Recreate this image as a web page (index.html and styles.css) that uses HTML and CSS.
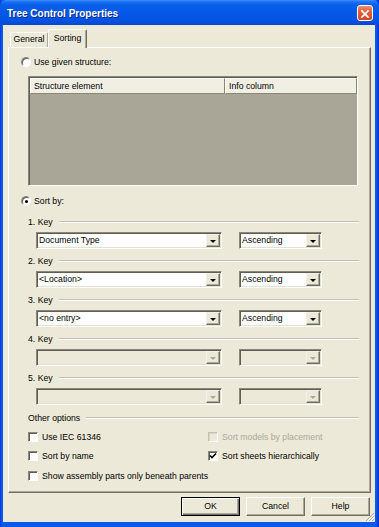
FILE: index.html
```html
<!DOCTYPE html>
<html>
<head>
<meta charset="utf-8">
<title>Tree Control Properties</title>
<link rel="stylesheet" href="styles.css">
</head>
<body>
<div class="window">
  <div class="titlebar">
    <span class="title">Tree Control Properties</span>
    <span class="close">
      <svg width="16" height="16" viewBox="0 0 16 16"><path d="M4.5 4.5 L11.5 11.5 M11.5 4.5 L4.5 11.5" stroke="#fff" stroke-width="2" stroke-linecap="square"/></svg>
    </span>
  </div>
  <div class="client">
    <div class="tabs">
      <div class="tab">General</div>
      <div class="tab active">Sorting</div>
    </div>
    <div class="panel">
      <div class="radio-row first"><span class="radio"></span><span>Use given structure:</span></div>
      <div class="list">
        <div class="list-head">
          <div class="col col-a">Structure element</div>
          <div class="col col-b">Info column</div>
        </div>
        <div class="list-body"></div>
      </div>
      <div class="radio-row second"><span class="radio checked"></span><span>Sort by:</span></div>

      <div class="group first-group"><span>1. Key</span><span class="line"></span></div>
      <div class="combos">
        <div class="combo wide"><span class="value">Document Type</span><span class="drop"><i></i></span></div>
        <div class="combo narrow"><span class="value">Ascending</span><span class="drop"><i></i></span></div>
      </div>

      <div class="group"><span>2. Key</span><span class="line"></span></div>
      <div class="combos">
        <div class="combo wide"><span class="value">&lt;Location&gt;</span><span class="drop"><i></i></span></div>
        <div class="combo narrow"><span class="value">Ascending</span><span class="drop"><i></i></span></div>
      </div>

      <div class="group"><span>3. Key</span><span class="line"></span></div>
      <div class="combos">
        <div class="combo wide"><span class="value">&lt;no entry&gt;</span><span class="drop"><i></i></span></div>
        <div class="combo narrow"><span class="value">Ascending</span><span class="drop"><i></i></span></div>
      </div>

      <div class="group"><span>4. Key</span><span class="line"></span></div>
      <div class="combos">
        <div class="combo wide disabled"><span class="value"></span><span class="drop"><i></i></span></div>
        <div class="combo narrow disabled"><span class="value"></span><span class="drop"><i></i></span></div>
      </div>

      <div class="group"><span>5. Key</span><span class="line"></span></div>
      <div class="combos">
        <div class="combo wide disabled"><span class="value"></span><span class="drop"><i></i></span></div>
        <div class="combo narrow disabled"><span class="value"></span><span class="drop"><i></i></span></div>
      </div>

      <div class="group other"><span>Other options</span><span class="line"></span></div>
      <div class="options">
        <div class="check-row"><span class="check"></span><span>Use IEC 61346</span></div>
        <div class="check-row disabled"><span class="check"></span><span>Sort models by placement</span></div>
        <div class="check-row"><span class="check"></span><span>Sort by name</span></div>
        <div class="check-row"><span class="check checked"><svg width="8" height="8" viewBox="0 0 8 8"><path d="M1 3.5 L3 5.5 L7 1.5" stroke="#000" stroke-width="1.6" fill="none"/></svg></span><span>Sort sheets hierarchically</span></div>
        <div class="check-row span"><span class="check"></span><span>Show assembly parts only beneath parents</span></div>
      </div>
    </div>
    <div class="buttons">
      <div class="btn default">OK</div>
      <div class="btn">Cancel</div>
      <div class="btn">Help</div>
    </div>
    <svg class="grip" width="10" height="10" viewBox="0 0 10 10">
      <path d="M9 1 L1 9 M9 4 L4 9 M9 7 L7 9" stroke="#aca899" stroke-width="1"/>
      <path d="M10 2 L2 10 M10 5 L5 10 M10 8 L8 10" stroke="#fff" stroke-width="1"/>
    </svg>
  </div>
</div>
</body>
</html>
```
FILE: styles.css
```css
html, body {
  margin: 0;
  padding: 0;
}
body {
  width: 379px;
  height: 527px;
  overflow: hidden;
  font-family: "Liberation Sans", Arial, sans-serif;
  font-size: 8.7px;
  color: #000;
}
.window {
  width: 379px;
  height: 527px;
  box-sizing: border-box;
  display: flex;
  flex-direction: column;
  background: linear-gradient(90deg, #0831d9 0, #0b4fe6 1px, #0a5ae9 2px, #0a5ae9 376px, #0b4fe6 377px, #0831d9 378px);
}
.titlebar {
  height: 25px;
  flex: none;
  display: flex;
  align-items: center;
  padding: 0 6px 0 7px;
  box-sizing: border-box;
  background: linear-gradient(180deg, #3d8ff7 0, #1a6ff2 2px, #0a5fe9 5px, #0559e8 12px, #0553e2 20px, #0648d2 25px);
  border-radius: 6px 6px 0 0;
}
.title {
  flex: 1;
  color: #fff;
  font-weight: bold;
  font-size: 10px;
  text-shadow: 1px 1px 0 #0a2a8a;
  padding-top: 1px;
}
.close {
  width: 16px;
  height: 16px;
  box-sizing: border-box;
  border: 1px solid #fff;
  border-radius: 3px;
  background: linear-gradient(180deg, #ee8b69 0, #e2603c 40%, #d6461e 100%);
  display: flex;
}
.client {
  position: relative;
  flex: 1;
  margin: 0 4px 5px 3px;
  background: #ece9d8;
  display: flex;
  flex-direction: column;
}
.tabs {
  height: 22px;
  flex: none;
  box-sizing: border-box;
  padding: 4px 0 0 7px;
  display: flex;
  align-items: flex-end;
}
.tab {
  height: 15px;
  box-sizing: border-box;
  border: 1px solid;
  border-color: #fff #716f64 transparent #fff;
  border-bottom: none;
  border-radius: 2px 2px 0 0;
  line-height: 13px;
  text-align: center;
  background: #ece9d8;
}
.tab:first-child {
  width: 38px;
  border-right-color: #aca899;
}
.tab.active {
  width: 39px;
  height: 19px;
  line-height: 16px;
  position: relative;
  z-index: 2;
  margin-bottom: -1px;
  box-shadow: inset -1px 0 #aca899;
}
.panel {
  flex: 1;
  margin: 0 4px 0 5px;
  box-sizing: border-box;
  border: 1px solid;
  border-color: #fff #716f64 #716f64 #fff;
  box-shadow: inset -1px -1px #aca899;
  display: flex;
  flex-direction: column;
  position: relative;
  z-index: 1;
}
.radio-row {
  height: 12px;
  display: flex;
  align-items: center;
  gap: 3px;
  padding-left: 12px;
  line-height: 12px;
}
.radio-row.first { margin-top: 8px; }
.radio-row.second { margin-top: 9px; }
.radio {
  width: 10px;
  height: 10px;
  box-sizing: border-box;
  border-radius: 50%;
  background: #fff;
  border: 1px solid;
  border-color: #8a877a #fff #fff #8a877a;
  box-shadow: inset 1px 1px #5f5d54;
  position: relative;
}
.radio.checked::after {
  content: "";
  position: absolute;
  left: 3px;
  top: 3px;
  width: 3px;
  height: 3px;
  border-radius: 50%;
  background: #000;
}
.list {
  margin: 8px 0 0 19px;
  width: 330px;
  height: 110px;
  box-sizing: border-box;
  border: 1px solid;
  border-color: #8a877a #fff #fff #8a877a;
  box-shadow: inset 1px 1px #5f5d54;
  display: flex;
  flex-direction: column;
  background: #a9a697;
  padding: 1px 0 0 1px;
}
.list-head {
  height: 16px;
  display: flex;
  flex: none;
}
.col {
  box-sizing: border-box;
  height: 16px;
  line-height: 14px;
  padding-left: 3px;
  background: #f1efe4;
  border: 1px solid;
  border-color: #fff #8a877a #8a877a #fff;
}
.col-a { width: 195px; }
.col-b { flex: 1; }
.list-body { flex: 1; }
.group {
  height: 12px;
  display: flex;
  align-items: center;
  gap: 6px;
  margin: 6px 11px 0 19px;
}
.group.first-group { margin-top: 9px; }
.group.other { margin-top: 7px; }
.line {
  flex: 1;
  height: 0;
  border-top: 1px solid #c4c1b2;
  border-bottom: 1px solid #fff;
}
.combos {
  margin: 4px 0 0 27px;
  display: flex;
  gap: 17px;
}
.combo {
  height: 17px;
  box-sizing: border-box;
  border: 1px solid;
  border-color: #8a877a #fff #fff #8a877a;
  box-shadow: inset 1px 1px #5f5d54, inset -1px -1px #e4e1d4;
  background: #fff;
  display: flex;
  align-items: center;
  padding: 1px 1px 1px 2px;
}
.combo.wide { width: 186px; }
.combo.narrow { width: 83px; }
.combo.disabled { background: #ece9d8; }
.value {
  flex: 1;
  line-height: 13px;
  white-space: nowrap;
}
.drop {
  width: 14px;
  height: 13px;
  box-sizing: border-box;
  border: 1px solid;
  border-color: #f4f2e8 #716f64 #716f64 #f4f2e8;
  box-shadow: inset -1px -1px #aca899;
  background: #ece9d8;
  display: flex;
  align-items: center;
  justify-content: center;
}
.drop i {
  width: 0;
  height: 0;
  border-left: 3px solid transparent;
  border-right: 3px solid transparent;
  border-top: 3px solid #000;
  margin-top: 1px;
}
.disabled .drop i { border-top-color: #aca899; }
.options {
  margin: 6px 0 0 19px;
  display: grid;
  grid-template-columns: 180px 1fr;
  row-gap: 6px;
}
.check-row {
  height: 13px;
  display: flex;
  align-items: center;
  gap: 4px;
}
.check-row.span { grid-column: 1 / span 2; margin-top: 1px; }
.check {
  width: 10px;
  height: 10px;
  box-sizing: border-box;
  background: #fff;
  border: 1px solid;
  border-color: #8a877a #fff #fff #8a877a;
  box-shadow: inset 1px 1px #5f5d54;
  display: flex;
  align-items: center;
  justify-content: center;
}
.check-row.disabled { color: #aca899; }
.check-row.disabled .check { background: #ece9d8; border-color: #c4c1b2 #fff #fff #c4c1b2; box-shadow: inset 1px 1px #d8d5c6; }
.buttons {
  height: 29px;
  flex: none;
  display: flex;
  justify-content: flex-end;
  gap: 6px;
  padding: 4px 5px 0 0;
  box-sizing: border-box;
}
.btn {
  width: 59px;
  height: 19px;
  box-sizing: border-box;
  border: 1px solid;
  border-color: #fff #716f64 #716f64 #fff;
  box-shadow: inset -1px -1px #aca899;
  text-align: center;
  line-height: 17px;
  background: #ece9d8;
}
.btn.default {
  border-color: #000;
  box-shadow: inset 1px 1px #fff, inset -1px -1px #716f64, inset -2px -2px #aca899;
}
.grip {
  position: absolute;
  right: 0;
  bottom: 0;
}
```
